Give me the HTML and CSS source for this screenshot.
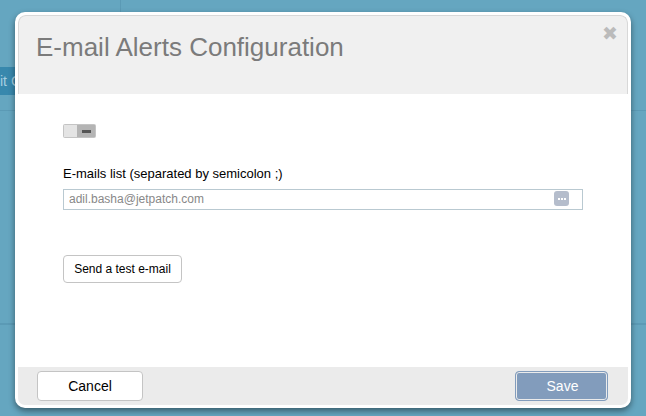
FILE: index.html
```html
<!DOCTYPE html>
<html>
<head>
  <meta charset="utf-8">
  <link rel="stylesheet" href="styles.css">
</head>
<body>
  <div class="backdrop">
    <div class="backdrop-top"></div>
    <div class="backdrop-tab">it Config</div>
    <div class="backdrop-row"></div>
    <div class="backdrop-row-low"></div>
  </div>

  <div class="modal">
    <div class="modal-header">
      <h2>E-mail Alerts Configuration</h2>
      <span class="close">&#10006;</span>
    </div>

    <div class="modal-body">
      <div class="toggle">
        <span class="toggle-knob"></span>
        <span class="toggle-off"><i></i></span>
      </div>

      <label class="field-label" for="emailsInput">E-mails list (separated by semicolon ;)</label>
      <div class="field">
        <input type="text" id="emailsInput" value="adil.basha@jetpatch.com" />
        <span class="field-icon"><i></i><i></i><i></i></span>
      </div>

      <button class="btn btn-test">Send a test e-mail</button>
    </div>

    <div class="modal-footer">
      <button class="btn btn-cancel">Cancel</button>
      <button class="btn btn-save">Save</button>
    </div>
  </div>
</body>
</html>
```

FILE: styles.css
```css
html, body {
  margin: 0;
  height: 100%;
  overflow: hidden;
}

body {
  position: relative;
  width: 646px;
  height: 416px;
  font-family: 'Liberation Sans', Arial, sans-serif;
  background: #65a6c0;
}

/* Page behind the dialog */
.backdrop {
  display: flex;
  flex-direction: column;
  height: 100%;
}

.backdrop-top {
  width: 120px;
  height: 67px;
  border-right: 1px solid #5b9ab5;
}

.backdrop-tab {
  width: 80px;
  height: 28px;
  background: #3888ad;
  color: #a5cfe0;
  font-size: 14px;
  line-height: 28px;
  white-space: nowrap;
}

.backdrop-row {
  height: 15px;
  border-bottom: 1px solid #5b9ab5;
}

.backdrop-row-low {
  height: 212px;
  border-bottom: 2px solid #5b9ab5;
}

/* Dialog */
.modal {
  position: absolute;
  left: 15px;
  top: 12px;
  width: 610px;
  height: 390px;
  display: flex;
  flex-direction: column;
  background: #fff;
  border: 3px solid #fff;
  border-radius: 10px;
  box-shadow: 0 3px 6px rgba(0, 0, 0, 0.45);
  overflow: hidden;
}

.modal-header {
  position: relative;
  height: 79px;
  box-sizing: border-box;
  padding: 16px 17px 0;
  background: #f0f0f0;
  border: 1px solid #d8d8d8;
  border-bottom: none;
  border-radius: 8px 8px 0 0;
}

.modal-header h2 {
  margin: 0;
  font-size: 26px;
  font-weight: normal;
  line-height: 30px;
  color: #7b7b7b;
}

.close {
  position: absolute;
  right: 9px;
  top: 7px;
  font-size: 19px;
  line-height: 22px;
  color: #bbb;
}

.modal-body {
  flex: 1;
  padding: 30px 45px 0;
}

.toggle {
  display: flex;
  width: 33px;
  height: 14px;
  background: #c4c4c4;
  border-radius: 2px;
}

.toggle-knob {
  width: 13px;
  height: 12px;
  margin: 1px 0 1px 1px;
  background: #e4e4e4;
}

.toggle-off {
  flex: 1;
  display: flex;
  align-items: center;
  justify-content: center;
  background: #b4b4b4;
  margin: 1px 1px 1px 0;
}

.toggle-off i {
  width: 9px;
  height: 3px;
  background: #555;
}

.field-label {
  display: block;
  margin-top: 28px;
  font-size: 13px;
  line-height: 16px;
  color: #000;
}

.field {
  position: relative;
  margin-top: 7px;
  width: 520px;
}

.field input {
  display: block;
  box-sizing: border-box;
  width: 100%;
  height: 21px;
  padding: 0 5px 2px;
  border: 1px solid #b9c9d1;
  outline: none;
  font-family: inherit;
  font-size: 12px;
  color: #888;
  background: #fff;
}

.field-icon {
  position: absolute;
  right: 14px;
  top: 2px;
  width: 15px;
  height: 15px;
  display: flex;
  align-items: center;
  justify-content: center;
  gap: 1px;
  background: #b5bdcc;
  border-radius: 3px;
}

.field-icon i {
  width: 2px;
  height: 2px;
  background: #fff;
}

.btn {
  box-sizing: border-box;
  font-family: inherit;
  background: #fff;
  color: #000;
  border: 1px solid #c4c4c4;
  border-radius: 4px;
  cursor: pointer;
}

.btn-test {
  display: block;
  width: 119px;
  height: 28px;
  margin-top: 45px;
  padding: 0;
  font-size: 12px;
}

.modal-footer {
  height: 38px;
  box-sizing: border-box;
  display: flex;
  justify-content: space-between;
  align-items: flex-start;
  padding: 4px 20px 0 19px;
  background: #ebebeb;
}

.btn-cancel {
  width: 106px;
  height: 30px;
  font-size: 14px;
}

.btn-save {
  width: 93px;
  height: 30px;
  padding-left: 8px;
  font-size: 14px;
  color: #fff;
  background: #829cbc;
  border: 1px solid #829cbc;
  box-shadow: inset 0 0 0 1px #ebebeb;
}
```
